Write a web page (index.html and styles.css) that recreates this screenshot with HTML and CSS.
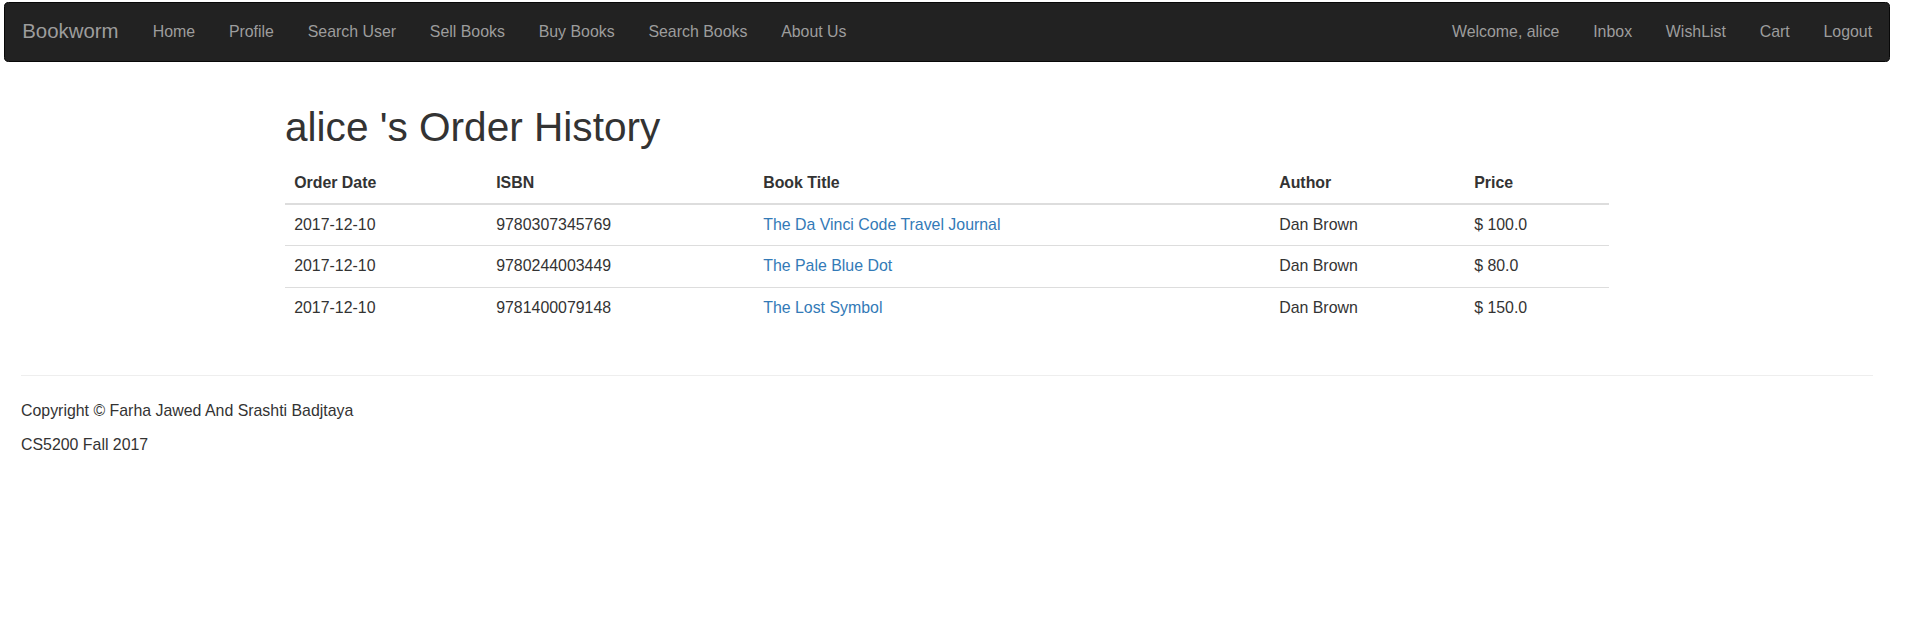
FILE: index.html
```html
<!DOCTYPE html>
<html lang="en">
<head>
<meta charset="utf-8">
<title>Order History</title>
<link rel="stylesheet" href="styles.css">
</head>
<body>
<div class="page">
  <nav class="navbar">
    <div class="nav-left">
      <a class="brand" href="#">Bookworm</a>
      <a class="nav-link" href="#">Home</a>
      <a class="nav-link" href="#">Profile</a>
      <a class="nav-link" href="#">Search User</a>
      <a class="nav-link" href="#">Sell Books</a>
      <a class="nav-link" href="#">Buy Books</a>
      <a class="nav-link" href="#">Search Books</a>
      <a class="nav-link" href="#">About Us</a>
    </div>
    <div class="nav-right">
      <a class="nav-link" href="#">Welcome, alice</a>
      <a class="nav-link" href="#">Inbox</a>
      <a class="nav-link" href="#">WishList</a>
      <a class="nav-link" href="#">Cart</a>
      <a class="nav-link" href="#">Logout</a>
    </div>
  </nav>

  <main class="container">
    <h1 class="title">alice 's Order History</h1>
    <table class="orders">
      <colgroup>
        <col class="c-date">
        <col class="c-isbn">
        <col class="c-title">
        <col class="c-author">
        <col class="c-price">
      </colgroup>
      <thead>
        <tr>
          <th>Order Date</th>
          <th>ISBN</th>
          <th>Book Title</th>
          <th>Author</th>
          <th>Price</th>
        </tr>
      </thead>
      <tbody>
        <tr>
          <td>2017-12-10</td>
          <td>9780307345769</td>
          <td><a href="#">The Da Vinci Code Travel Journal</a></td>
          <td>Dan Brown</td>
          <td>$ 100.0</td>
        </tr>
        <tr>
          <td>2017-12-10</td>
          <td>9780244003449</td>
          <td><a href="#">The Pale Blue Dot</a></td>
          <td>Dan Brown</td>
          <td>$ 80.0</td>
        </tr>
        <tr>
          <td>2017-12-10</td>
          <td>9781400079148</td>
          <td><a href="#">The Lost Symbol</a></td>
          <td>Dan Brown</td>
          <td>$ 150.0</td>
        </tr>
      </tbody>
    </table>
  </main>

  <footer class="footer">
    <hr class="rule">
    <p class="line">Copyright &copy; Farha Jawed And Srashti Badjtaya</p>
    <p class="line">CS5200 Fall 2017</p>
  </footer>
</div>
</body>
</html>
```

FILE: styles.css
```css
html, body {
  margin: 0;
  padding: 0;
  background: #fff;
}

body {
  font-family: "Liberation Sans", Arial, Helvetica, sans-serif;
  font-size: 15.9px;
  line-height: 23px;
  color: #333;
}

.page {
  margin: 2px 17px 0 4px;
}

a {
  text-decoration: none;
}

/* Navbar */
.navbar {
  display: flex;
  justify-content: space-between;
  align-items: stretch;
  background: #222;
  border: 1px solid #080808;
  border-radius: 4.6px;
  height: 57.5px;
}

.nav-left,
.nav-right {
  display: flex;
  align-items: stretch;
}

.brand {
  display: block;
  padding: 17.25px 17.25px;
  font-size: 20.4px;
  line-height: 23px;
  color: #9d9d9d;
}

.nav-link {
  display: block;
  padding: 17.25px 16.9px;
  line-height: 23px;
  color: #9d9d9d;
}

/* Content */
.container {
  width: 1324px;
  margin: 0 auto;
  padding-top: 43px;
}

.title {
  margin: 0 0 12.5px;
  font-size: 40.6px;
  line-height: 45.5px;
  font-weight: 500;
  color: #333;
}

.orders {
  width: 100%;
  table-layout: fixed;
  border-collapse: collapse;
  border-spacing: 0;
  margin: 0;
}

.c-date { width: 202px; }
.c-isbn { width: 267px; }
.c-title { width: 516px; }
.c-author { width: 195px; }
.c-price { width: 144px; }

.orders th,
.orders td {
  text-align: left;
  vertical-align: top;
  padding: 9.2px;
  line-height: 22px;
}

.orders th {
  font-weight: bold;
  border-bottom: 2px solid #ddd;
}

.orders td {
  border-top: 1px solid #ddd;
}

.orders a {
  color: #337ab7;
}

/* Footer */
.footer {
  padding: 46.5px 17px 0;
}

.rule {
  margin: 0 0 23px;
  border: 0;
  border-top: 1px solid #eee;
  height: 0;
}

.line {
  margin: 0 0 11.5px;
}
```
